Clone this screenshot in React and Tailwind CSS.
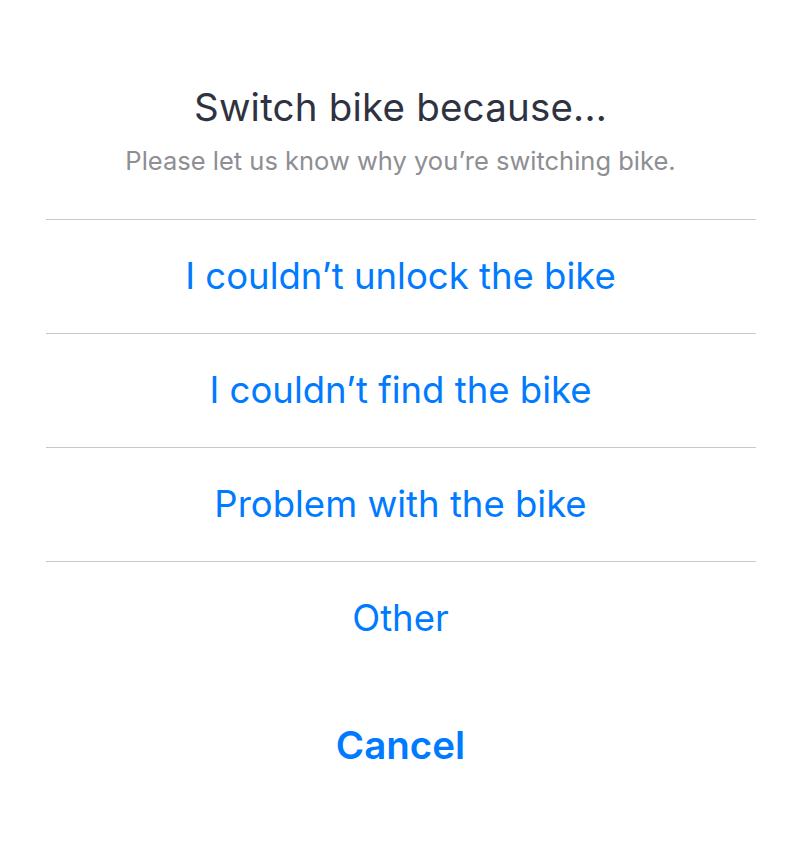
import React from 'react';

const options = [
  'I couldn’t unlock the bike',
  'I couldn’t find the bike',
  'Problem with the bike',
  'Other',
];

export default function App() {
  return (
    <div className="w-[804px] h-[846px] pr-[3px] bg-white font-['Inter','Liberation_Sans',sans-serif] flex flex-col items-center">
      <div className="flex flex-col items-center pt-[82px] pb-[43px]">
        <h1 className="text-[38.5px] leading-[50px] text-[#2f3241] tracking-[0.2px]">Switch bike because...</h1>
        <p className="mt-[14px] text-[25.5px] leading-[30px] text-[#8e8e93]">Please let us know why you’re switching bike.</p>
      </div>
      <div className="w-[710px] flex flex-col">
        {options.map((opt) => (
          <button
            key={opt}
            className="h-[114px] border-t border-[#c8c7cc] flex items-center justify-center text-[36.5px] text-[#007aff]"
          >
            {opt}
          </button>
        ))}
      </div>
      <button className="mt-[14px] h-[114px] flex items-center justify-center text-[38.5px] font-semibold text-[#007aff]">
        Cancel
      </button>
    </div>
  );
}
